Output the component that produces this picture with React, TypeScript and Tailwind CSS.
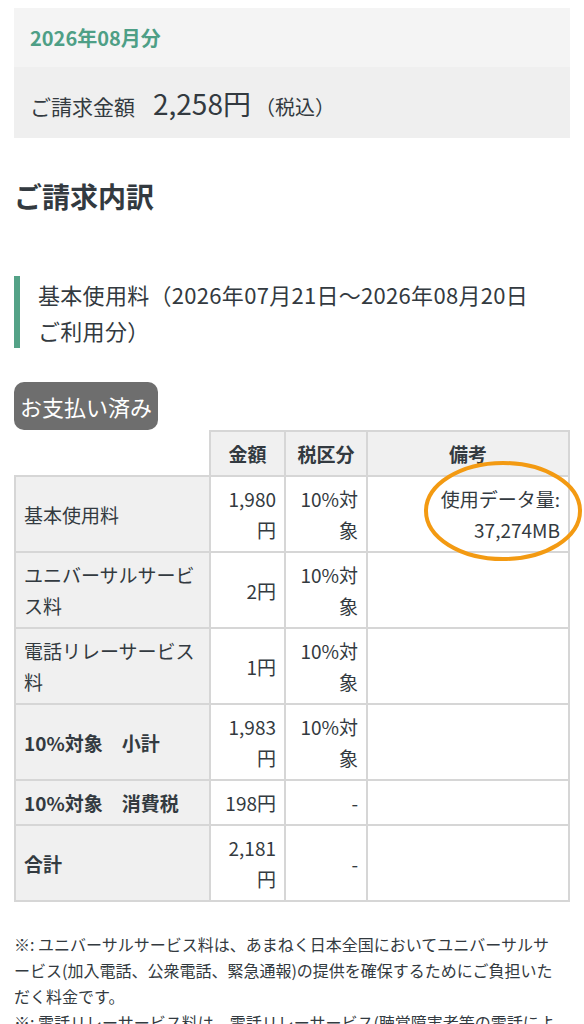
import React from "react";

type Row = {
  label: string;
  amount: string;
  tax: string;
  note?: React.ReactNode;
  bold?: boolean;
};

const rows: Row[] = [
  {
    label: "基本使用料",
    amount: "1,980円",
    tax: "10%対象",
    note: (
      <>
        使用データ量:
        <br />
        37,274MB
      </>
    ),
  },
  { label: "ユニバーサルサービス料", amount: "2円", tax: "10%対象" },
  { label: "電話リレーサービス料", amount: "1円", tax: "10%対象" },
  { label: "10%対象　小計", amount: "1,983円", tax: "10%対象", bold: true },
  { label: "10%対象　消費税", amount: "198円", tax: "-", bold: true },
  { label: "合計", amount: "2,181円", tax: "-", bold: true },
];

const font = {
  fontFamily: '"Noto Sans CJK JP", "Noto Sans", sans-serif',
};

export default function App() {
  return (
    <div className="min-h-screen bg-white px-[14px] pt-2 text-[#333a40]" style={font}>
      {/* Billing summary */}
      <div>
        <div className="flex h-[59px] items-center bg-[#f4f4f4] px-4">
          <p className="text-[20px] font-bold text-[#4e9f86]">2026年08月分</p>
        </div>
        <div className="flex h-[71px] items-center bg-[#efefef] px-4">
          <p className="flex items-baseline text-[21px]">
            ご請求金額
            <span className="ml-[18px] text-[28px]">2,258円</span>
            <span className="ml-1 text-[20px]">（税込）</span>
          </p>
        </div>
      </div>

      <h2 className="mt-[40px] text-[28px] font-bold leading-[36px]">ご請求内訳</h2>

      {/* Section title */}
      <div className="mt-[62px] border-l-[6px] border-[#54a287] pl-[18px]">
        <p className="text-[22px] leading-[36px] tracking-[0.3px]">
          基本使用料（2026年07月21日～2026年08月20日
          <br />
          ご利用分）
        </p>
      </div>

      <div className="mt-[34px]">
        <span className="inline-block rounded-[10px] bg-[#6e6e6e] px-[6px] text-[22px] leading-[48px] text-white">
          お支払い済み
        </span>
      </div>

      {/* Breakdown table */}
      <div className="relative">
        <table className="w-full table-fixed border-collapse text-[19px] leading-[31px]">
          <colgroup>
            <col className="w-[195px]" />
            <col className="w-[75px]" />
            <col className="w-[82px]" />
            <col />
          </colgroup>
          <thead>
            <tr>
              <th className="border-0 bg-white" />
              <th className="border-2 border-[#d6d6d6] bg-[#f0f0f0] py-[6px] text-center font-bold">金額</th>
              <th className="border-2 border-[#d6d6d6] bg-[#f0f0f0] py-[6px] text-center font-bold">税区分</th>
              <th className="border-2 border-[#d6d6d6] bg-[#f0f0f0] py-[6px] text-center font-bold">備考</th>
            </tr>
          </thead>
          <tbody>
            {rows.map((r) => (
              <tr key={r.label}>
                <td
                  className={
                    "border-2 border-[#d6d6d6] bg-[#f0f0f0] px-2 py-[6px] text-left " +
                    (r.bold ? "font-bold" : "")
                  }
                >
                  {r.label}
                </td>
                <td className="border-2 border-[#d6d6d6] px-2 py-[6px] text-right">{r.amount}</td>
                <td className="border-2 border-[#d6d6d6] px-2 py-[6px] text-right">{r.tax}</td>
                <td className="border-2 border-[#d6d6d6] px-2 py-[6px] text-right">{r.note}</td>
              </tr>
            ))}
          </tbody>
        </table>

        {/* Highlight ring */}
        <svg
          className="pointer-events-none absolute left-[408px] top-[30px]"
          width="162"
          height="104"
          viewBox="0 0 162 104"
        >
          <ellipse cx="81" cy="51" rx="77" ry="48" fill="none" stroke="#f39a12" strokeWidth="4" />
        </svg>
      </div>

      {/* Notes */}
      <div className="mt-[29px] text-[16px] leading-[26px]">
        <p>
          ※: ユニバーサルサービス料は、あまねく日本全国においてユニバーサルサ
          <br />
          ービス(加入電話、公衆電話、緊急通報)の提供を確保するためにご負担いた
          <br />
          だく料金です。
        </p>
        <p>
          ※: 電話リレーサービス料は、電話リレーサービス(聴覚障害者等の電話によ
          <br />
          る意思疎通を手話等により仲介するサービス)の提供を確保するためにご負担
        </p>
      </div>
    </div>
  );
}
